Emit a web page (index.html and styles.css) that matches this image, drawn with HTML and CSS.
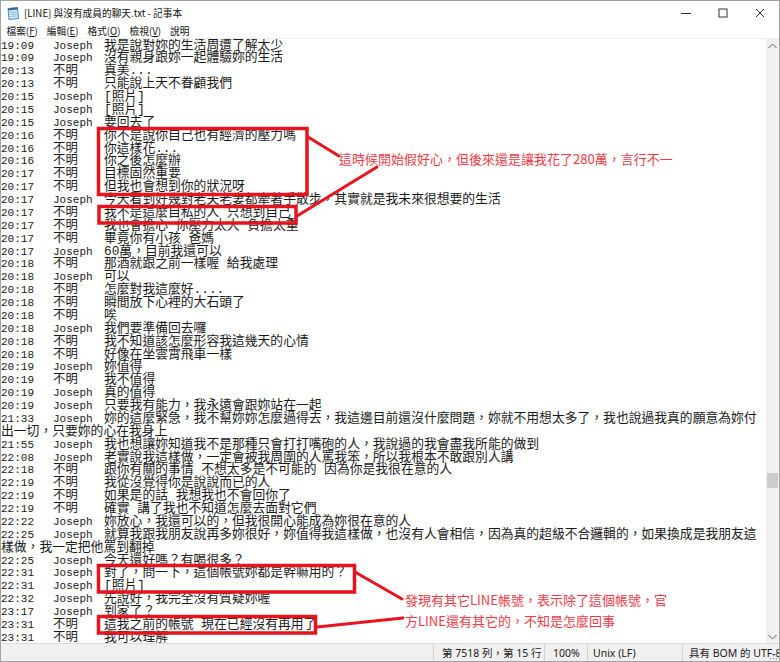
FILE: index.html
```html
<!DOCTYPE html>
<html lang="zh-TW">
<head>
    <meta charset="UTF-8">
    <title>[LINE] 與沒有成員的聊天.txt - 記事本</title>
    <link rel="stylesheet" href="styles.css">
</head>
<body>
<div class="window">
    <div class="titlebar">
        <svg class="app-icon" viewBox="0 0 14 14">
            <path d="M2 2.5 L11.5 1.5 L12.5 12.5 L3 13.5 Z" fill="#cfe9f7" stroke="#4f86b5" stroke-width="1"/>
            <path d="M2 2.5 L11.5 1.5 L11.7 3.6 L2.2 4.6 Z" fill="#2d6aa3"/>
            <path d="M3.6 6.5 L10.6 5.8 M3.8 8.5 L10.8 7.8 M4 10.5 L11 9.8" stroke="#7fb0d6" stroke-width="0.8"/>
        </svg>
        <span class="title">[LINE] 與沒有成員的聊天.txt - 記事本</span>
        <div class="controls">
            <span class="ctl">
                <svg width="10" height="10" viewBox="0 0 10 10"><path d="M0 5.5 H10" stroke="#333" stroke-width="1"/></svg>
            </span>
            <span class="ctl">
                <svg width="10" height="10" viewBox="0 0 10 10"><rect x="1" y="1" width="8" height="8" fill="none" stroke="#333" stroke-width="1"/></svg>
            </span>
            <span class="ctl">
                <svg width="10" height="10" viewBox="0 0 10 10"><path d="M1 1 L9 9 M9 1 L1 9" stroke="#333" stroke-width="1"/></svg>
            </span>
        </div>
    </div>
    <div class="menubar">
        <span class="menu">檔案(<u>F</u>)</span>
        <span class="menu">編輯(<u>E</u>)</span>
        <span class="menu">格式(<u>O</u>)</span>
        <span class="menu">檢視(<u>V</u>)</span>
        <span class="menu">說明</span>
    </div>
    <div class="editor">
        <div class="text">
            <p class="row"><span class="t">19:09</span><span class="n">Joseph</span>我是說對妳的生活周遭了解太少</p>
            <p class="row"><span class="t">19:09</span><span class="n">Joseph</span>沒有親身跟妳一起體驗妳的生活</p>
            <p class="row"><span class="t">20:13</span><span class="n zh">不明</span>真美...</p>
            <p class="row"><span class="t">20:13</span><span class="n zh">不明</span>只能說上天不眷顧我們</p>
            <p class="row"><span class="t">20:15</span><span class="n">Joseph</span>[照片]</p>
            <p class="row"><span class="t">20:15</span><span class="n">Joseph</span>[照片]</p>
            <p class="row"><span class="t">20:15</span><span class="n">Joseph</span>要回去了</p>
            <p class="row"><span class="t">20:16</span><span class="n zh">不明</span>你不是說你自己也有經濟的壓力嗎</p>
            <p class="row"><span class="t">20:16</span><span class="n zh">不明</span>你這樣花...</p>
            <p class="row"><span class="t">20:16</span><span class="n zh">不明</span>你之後怎麼辦</p>
            <p class="row"><span class="t">20:17</span><span class="n zh">不明</span>目標固然重要</p>
            <p class="row"><span class="t">20:17</span><span class="n zh">不明</span>但我也會想到你的狀況呀</p>
            <p class="row"><span class="t">20:17</span><span class="n">Joseph</span>今天看到好幾對老夫老妻都牽著手散步，其實就是我未來很想要的生活</p>
            <p class="row"><span class="t">20:17</span><span class="n zh">不明</span>我不是這麼自私的人 只想到自己</p>
            <p class="row"><span class="t">20:17</span><span class="n zh">不明</span>我也會擔心 你壓力太大 負擔太重</p>
            <p class="row"><span class="t">20:17</span><span class="n zh">不明</span>畢竟你有小孩 爸媽</p>
            <p class="row"><span class="t">20:17</span><span class="n">Joseph</span>60萬，目前我還可以</p>
            <p class="row"><span class="t">20:18</span><span class="n zh">不明</span>那酒就跟之前一樣喔 給我處理</p>
            <p class="row"><span class="t">20:18</span><span class="n">Joseph</span>可以</p>
            <p class="row"><span class="t">20:18</span><span class="n zh">不明</span>怎麼對我這麼好....</p>
            <p class="row"><span class="t">20:18</span><span class="n zh">不明</span>瞬間放下心裡的大石頭了</p>
            <p class="row"><span class="t">20:18</span><span class="n zh">不明</span>唉</p>
            <p class="row"><span class="t">20:18</span><span class="n">Joseph</span>我們要準備回去囉</p>
            <p class="row"><span class="t">20:18</span><span class="n zh">不明</span>我不知道該怎麼形容我這幾天的心情</p>
            <p class="row"><span class="t">20:18</span><span class="n zh">不明</span>好像在坐雲霄飛車一樣</p>
            <p class="row"><span class="t">20:19</span><span class="n">Joseph</span>妳值得</p>
            <p class="row"><span class="t">20:19</span><span class="n zh">不明</span>我不值得</p>
            <p class="row"><span class="t">20:19</span><span class="n">Joseph</span>真的值得</p>
            <p class="row"><span class="t">20:19</span><span class="n">Joseph</span>只要我有能力，我永遠會跟妳站在一起</p>
            <p class="row"><span class="t">21:33</span><span class="n">Joseph</span>妳的這麼緊急，我不幫妳妳怎麼過得去，我這邊目前還沒什麼問題，妳就不用想太多了，我也說過我真的願意為妳付</p>
            <p class="row">出一切，只要妳的心在我身上</p>
            <p class="row"><span class="t">21:55</span><span class="n">Joseph</span>我也想讓妳知道我不是那種只會打打嘴砲的人，我說過的我會盡我所能的做到</p>
            <p class="row"><span class="t">22:08</span><span class="n">Joseph</span>老實說我這樣做，一定會被我周圍的人罵我笨，所以我根本不敢跟別人講</p>
            <p class="row"><span class="t">22:18</span><span class="n zh">不明</span>跟你有關的事情 不想太多是不可能的 因為你是我很在意的人</p>
            <p class="row"><span class="t">22:19</span><span class="n zh">不明</span>我從沒覺得你是說說而已的人</p>
            <p class="row"><span class="t">22:19</span><span class="n zh">不明</span>如果是的話 我想我也不會回你了</p>
            <p class="row"><span class="t">22:19</span><span class="n zh">不明</span>確實 講了我也不知道怎麼去面對它們</p>
            <p class="row"><span class="t">22:22</span><span class="n">Joseph</span>妳放心，我還可以的，但我很開心能成為妳很在意的人</p>
            <p class="row"><span class="t">22:25</span><span class="n">Joseph</span>就算我跟我朋友說再多妳很好，妳值得我這樣做，也沒有人會相信，因為真的超級不合邏輯的，如果換成是我朋友這</p>
            <p class="row">樣做，我一定把他罵到翻掉</p>
            <p class="row"><span class="t">22:25</span><span class="n">Joseph</span>今天還好嗎？有喝很多？</p>
            <p class="row"><span class="t">22:31</span><span class="n">Joseph</span>對了，問一下，這個帳號妳都是幹嘛用的？</p>
            <p class="row"><span class="t">22:31</span><span class="n">Joseph</span>[照片]</p>
            <p class="row"><span class="t">22:32</span><span class="n">Joseph</span>先說好，我完全沒有質疑妳喔</p>
            <p class="row"><span class="t">23:17</span><span class="n">Joseph</span>到家了？</p>
            <p class="row"><span class="t">23:31</span><span class="n zh">不明</span>這我之前的帳號 現在已經沒有再用了</p>
            <p class="row"><span class="t">23:31</span><span class="n zh">不明</span>我可以理解</p>
        </div>
        <div class="vscroll">
            <span class="arrow">
                <svg width="9" height="6" viewBox="0 0 9 6"><path d="M0.5 5 L4.5 1 L8.5 5" fill="none" stroke="#606060" stroke-width="1"/></svg>
            </span>
            <span class="thumb"></span>
            <span class="arrow bottom">
                <svg width="9" height="6" viewBox="0 0 9 6"><path d="M0.5 1 L4.5 5 L8.5 1" fill="none" stroke="#606060" stroke-width="1"/></svg>
            </span>
        </div>
    </div>
    <div class="statusbar">
        <span class="cell grow"></span>
        <span class="cell pos">第 7518 列，第 15 行</span>
        <span class="cell zoom">100%</span>
        <span class="cell eol">Unix (LF)</span>
        <span class="cell enc">具有 BOM 的 UTF-8</span>
        <svg class="grip" width="8" height="8" viewBox="0 0 8 8">
            <rect x="6" y="0" width="1.2" height="1.2" fill="#9a9a9a"/>
            <rect x="3" y="3" width="1.2" height="1.2" fill="#9a9a9a"/>
            <rect x="6" y="3" width="1.2" height="1.2" fill="#9a9a9a"/>
            <rect x="0" y="6" width="1.2" height="1.2" fill="#9a9a9a"/>
            <rect x="3" y="6" width="1.2" height="1.2" fill="#9a9a9a"/>
            <rect x="6" y="6" width="1.2" height="1.2" fill="#9a9a9a"/>
        </svg>
    </div>

    <!-- 標註：紅框與連線 -->
    <svg class="marks" width="780" height="662" viewBox="0 0 780 662">
        <g fill="none" stroke="#e8141d" stroke-width="3.5">
            <rect x="98.5" y="128.5" width="208.5" height="66"/>
            <rect x="99" y="206.5" width="197" height="16.5"/>
            <rect x="98.5" y="565.5" width="256" height="26.5"/>
            <rect x="98.5" y="616.5" width="217" height="16.5"/>
        </g>
        <g stroke="#e8141d" stroke-width="3" stroke-linecap="round">
            <line x1="308" y1="137" x2="339" y2="156"/>
            <line x1="377" y1="167" x2="297" y2="216"/>
            <line x1="355" y1="572" x2="402" y2="599"/>
            <line x1="317" y1="627" x2="403" y2="618"/>
        </g>
    </svg>
    <div class="note note-top">這時候開始假好心，但後來還是讓我花了280萬，言行不一</div>
    <div class="note note-bottom">
        <p>發現有其它LINE帳號，表示除了這個帳號，官</p>
        <p>方LINE還有其它的，不知是怎麼回事</p>
    </div>
</div>
</body>
</html>
```

FILE: styles.css
```css
* {
    padding: 0;
    margin: 0;
    box-sizing: border-box;
}
body {
    width: 780px;
    height: 662px;
    overflow: hidden;
    background: #fff;
    font-family: "Noto Sans CJK TC", "Noto Sans", sans-serif;
    color: #000;
}
.window {
    position: relative;
    width: 780px;
    height: 662px;
    border: 1px solid #a3a3a3;
    display: flex;
    flex-direction: column;
    background: #fff;
}

/* 標題列 */
.titlebar {
    height: 23px;
    display: flex;
    align-items: center;
    padding-left: 5px;
}
.app-icon {
    width: 14px;
    height: 14px;
    margin-right: 4px;
}
.title {
    font-size: 9.7px;
    line-height: 14px;
    color: #111;
}
.controls {
    margin-left: auto;
    display: flex;
    height: 100%;
}
.ctl {
    width: 37.3px;
    display: flex;
    align-items: center;
    justify-content: center;
}

/* 選單 */
.menubar {
    height: 15px;
    display: flex;
    align-items: center;
    padding-left: 1px;
    border-bottom: 1px solid #f0f0f0;
}
.menu {
    font-size: 9.7px;
    line-height: 14px;
    padding: 0 4.5px;
    color: #111;
}
.menu u {
    text-underline-offset: 1px;
}

/* 編輯區 */
.editor {
    flex: 1;
    display: flex;
    min-height: 0;
}
.text {
    flex: 1;
    overflow: hidden;
    padding-top: 0.5px;
}
.row {
    height: 12.89px;
    line-height: 12.89px;
    white-space: pre;
    font-family: "Liberation Mono", "Noto Sans CJK TC", monospace;
    font-size: 12.8px;
    color: #1a1a1a;
}
.t,
.n {
    display: inline-block;
    font-size: 11px;
    vertical-align: top;
}
.t {
    width: 52px;
}
.n {
    width: 51px;
}
.n.zh {
    font-size: 12.4px;
}

/* 捲軸 */
.vscroll {
    width: 13px;
    background: #f0f0f0;
    display: flex;
    flex-direction: column;
    align-items: center;
}
.arrow {
    height: 13px;
    display: flex;
    align-items: center;
    justify-content: center;
}
.arrow.bottom {
    margin-top: auto;
}
.thumb {
    width: 11px;
    height: 15px;
    margin-top: 421px;
    background: #cdcdcd;
}

/* 狀態列 */
.statusbar {
    height: 18px;
    display: flex;
    align-items: center;
    background: #f0f0f0;
    border-top: 1px solid #dcdcdc;
    font-family: "Noto Sans", "Noto Sans CJK TC", sans-serif;
    font-size: 10.5px;
    color: #222;
    position: relative;
}
.cell {
    height: 100%;
    display: flex;
    align-items: center;
    border-left: 1px solid #d2d2d2;
    padding-left: 8px;
    white-space: nowrap;
    overflow: hidden;
}
.cell.grow {
    flex: 1;
    border-left: none;
}
.cell.pos {
    width: 111px;
}
.cell.zoom {
    width: 43px;
}
.cell.eol {
    width: 95px;
    padding-left: 5px;
}
.cell.enc {
    width: 97px;
    padding-left: 6px;
}
.grip {
    position: absolute;
    right: 1px;
    bottom: 1px;
}

/* 標註 */
.marks {
    position: absolute;
    left: -1px;
    top: -1px;
    pointer-events: none;
}
.note {
    position: absolute;
    font-family: "Noto Sans CJK TC", sans-serif;
    font-size: 13px;
    color: #f03a47;
    white-space: nowrap;
}
.note-top {
    left: 338px;
    top: 149px;
    line-height: 17px;
}
.note-bottom {
    left: 404px;
    top: 588px;
    line-height: 21px;
}
```
